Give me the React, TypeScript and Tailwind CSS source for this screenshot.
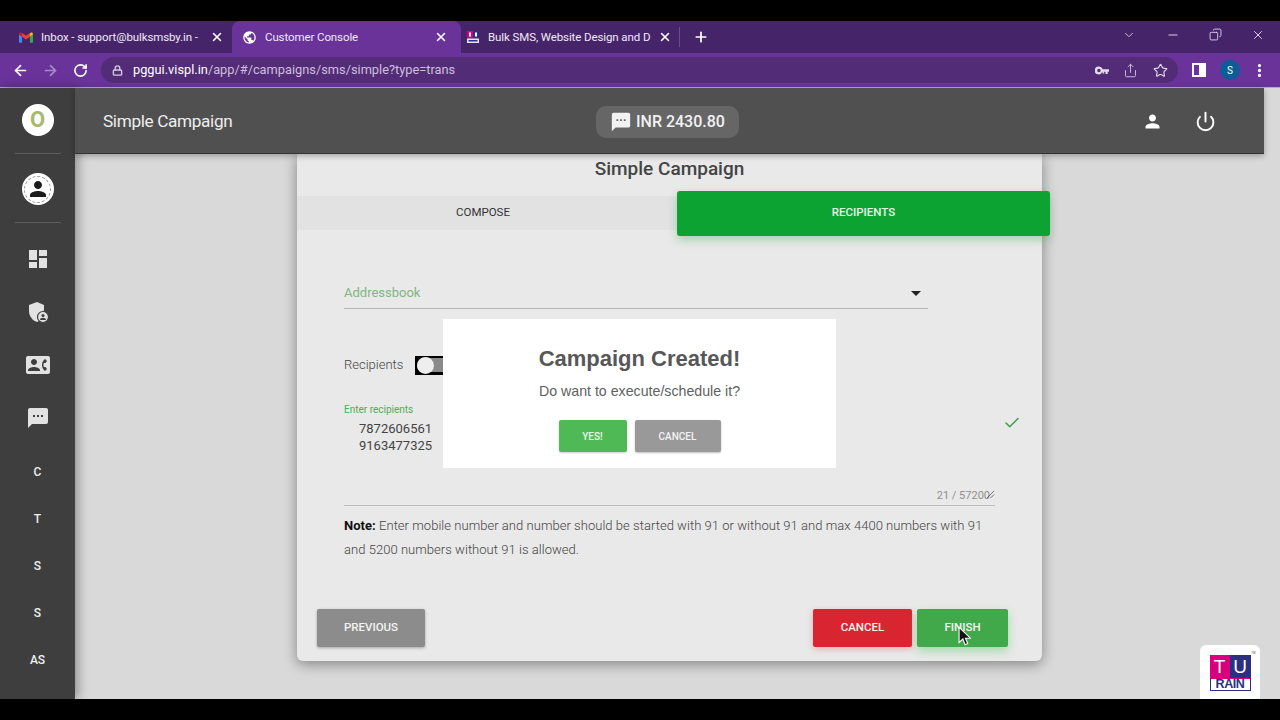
import { ArrowLeft, ArrowRight, ChevronDown, Copy, Lock, Minus, MoreVertical, Plus, Power, RotateCw, Share, Star, X, Check } from "lucide-react";

const SMS_PATH =
	"M20 2H4c-1.1 0-1.99.9-1.99 2L2 22l4-4h14c1.1 0 2-.9 2-2V4c0-1.1-.9-2-2-2zM9 11H7V9h2v2zm4 0h-2V9h2v2zm4 0h-2V9h2v2z";
const PERSON_PATH =
	"M12 12c2.21 0 4-1.79 4-4s-1.79-4-4-4-4 1.79-4 4 1.79 4 4 4zm0 2c-2.67 0-8 1.34-8 4v2h16v-2c0-2.66-5.33-4-8-4z";

function MaterialIcon({ d, className }: { d: string; className?: string }) {
	return (
		<svg viewBox="0 0 24 24" fill="currentColor" className={className} aria-hidden="true">
			<path d={d} />
		</svg>
	);
}

function GmailIcon() {
	return (
		<svg viewBox="0 0 16 12" className="h-[11px] w-[14px] shrink-0" aria-hidden="true">
			<path d="M0 2v9a1 1 0 0 0 1 1h2.5V5z" fill="#4285f4" />
			<path d="M16 2v9a1 1 0 0 1-1 1h-2.5V5z" fill="#34a853" />
			<path d="M3.5 5 8 8.4 12.5 5V1H12L8 4 4 1h-.5z" fill="#ea4335" />
			<path d="M0 2c0-1.6 2-2.5 3.5-1v4L0 2.4z" fill="#c5221f" />
			<path d="M16 2c0-1.6-2-2.5-3.5-1v4L16 2.4z" fill="#fbbc04" />
		</svg>
	);
}

function TuRainFavicon() {
	return (
		<svg viewBox="0 0 14 14" className="h-[14px] w-[14px] shrink-0" aria-hidden="true">
			<rect x="1" y="1" width="6" height="7" fill="#d6007f" />
			<rect x="7" y="1" width="6" height="7" fill="#2b3180" />
			<rect x="1" y="8.5" width="12" height="4.5" fill="#e8e4ee" />
			<rect x="3" y="2.5" width="2" height="4" fill="#fff" />
			<rect x="9" y="2.5" width="2" height="4" fill="#fff" />
			<rect x="2.5" y="10" width="9" height="1.5" fill="#2b3180" />
		</svg>
	);
}

function ChromeTab({
	icon,
	title,
	active,
	className,
}: {
	icon: React.ReactNode;
	title: string;
	active?: boolean;
	className?: string;
}) {
	return (
		<div className={`flex h-full items-center ${active ? "rounded-t-[8px] bg-[#693399]" : ""} ${className ?? ""}`}>
			{icon}
			<span className="ml-[8px] mt-[1px] min-w-0 flex-1 whitespace-nowrap text-[11.5px] tracking-[-0.1px] text-[#f0e8f6]">
				{title}
			</span>
			<X className="ml-[6px] size-[14px] shrink-0 text-white" strokeWidth={2.6} />
		</div>
	);
}

function BrowserChrome() {
	return (
		<>
			<div className="flex h-[32px] shrink-0 items-center bg-[#46246a]">
				<ChromeTab
					className="w-[232px] pl-[19px] pr-[8px]"
					icon={<GmailIcon />}
					title="Inbox - support@bulksmsby.in -"
				/>
				<ChromeTab
					active
					className="w-[229px] pl-[10px] pr-[13px]"
					icon={
						<MaterialIcon
							className="size-[15px] shrink-0 text-white"
							d="M12 2C6.48 2 2 6.48 2 12s4.48 10 10 10 10-4.48 10-10S17.52 2 12 2zm-1 17.93c-3.95-.49-7-3.85-7-7.93 0-.62.08-1.21.21-1.79L9 15v1c0 1.1.9 2 2 2v1.93zm6.9-2.54c-.26-.81-1-1.39-1.9-1.39h-1v-3c0-.55-.45-1-1-1H8v-2h2c.55 0 1-.45 1-1V7h2c1.1 0 2-.9 2-2v-.41c2.93 1.19 5 4.06 5 7.41 0 2.08-.8 3.97-2.1 5.39z"
						/>
					}
					title="Customer Console"
				/>
				<ChromeTab
					className="w-[218px] pl-[5px] pr-[7px]"
					icon={<TuRainFavicon />}
					title="Bulk SMS, Website Design and D"
				/>
				<div className="h-[20px] w-px bg-[#6d4c92]" />
				<Plus className="ml-[13px] size-[16px] text-white" strokeWidth={2.6} />
				<div className="ml-auto flex items-center pb-[5px] text-[#e6dcef]">
					<ChevronDown className="mr-[30px] size-[14px]" strokeWidth={1.4} />
					<Minus className="mr-[29px] size-[14px]" strokeWidth={1.6} />
					<Copy className="mr-[29px] size-[13px] -scale-x-100" strokeWidth={1.6} />
					<X className="mr-[15px] size-[14px]" strokeWidth={1.6} />
				</div>
			</div>
			<div className="flex h-[35px] shrink-0 items-center border-b border-[#b9a3d0] bg-[#693399] text-white">
				<ArrowLeft className="ml-[12px] size-[17px]" strokeWidth={2.4} />
				<ArrowRight className="ml-[13px] size-[17px] text-[#a88bc6]" strokeWidth={2.4} />
				<RotateCw className="ml-[14px] size-[15px]" strokeWidth={2.6} />
				<div className="ml-[13px] flex h-[26px] w-[1077px] items-center rounded-full bg-[#532c78] pl-[11px] pr-[10px]">
					<Lock className="size-[11px] text-[#d5c8e2]" strokeWidth={3} />
					<span className="ml-[10px] text-[12.8px] text-white">
						pggui.vispl.in<span className="text-[#cdbedd]">/app/#/campaigns/sms/simple?type=trans</span>
					</span>
					<svg viewBox="0 0 16 10" className="ml-auto mr-[-2px] h-[9px] w-[14px] text-[#e4dbed]" aria-hidden="true">
						<path
							fill="currentColor"
							fillRule="evenodd"
							d="M4.500 0.500a4.500 4.500 0 0 1 4.300 3H16v3h-1.500v2.500h-2.500V6.500h-1.500v2h-2V6.500h-.2a4.500 4.500 0 1 1-4.300-6zm0 2.500a2 2 0 1 0 0 4 2 2 0 0 0 0-4z"
						/>
					</svg>
					<Share className="ml-[16px] size-[15px] text-[#cdbedd]" strokeWidth={1.5} />
					<Star className="ml-[15px] size-[15px] text-[#e4dbed]" strokeWidth={1.8} />
				</div>
				<div className="ml-[14px] flex h-[14px] w-[14px] justify-end border-[2px] border-white bg-[#693399]">
					<div className="h-full w-[5px] bg-white" />
				</div>
				<div className="ml-[14px] flex size-[20px] items-center justify-center rounded-full bg-[#0a5d96] text-[10px] text-white">
					S
				</div>
				<MoreVertical className="ml-[11px] size-[17px]" strokeWidth={2.6} />
			</div>
		</>
	);
}

function SidebarLetter({ label, className }: { label: string; className?: string }) {
	return (
		<div className={`text-center text-[12px] font-medium leading-[14px] text-[#eeeeee] ${className ?? ""}`}>
			{label}
		</div>
	);
}

function Sidebar() {
	return (
		<aside className="z-10 flex w-[75px] shrink-0 flex-col items-center bg-[#3e3e3e] shadow-[3px_0_10px_rgba(0,0,0,0.35)]">
			<div className="mt-[16px] flex size-[32px] items-center justify-center rounded-full bg-white text-[22px] font-bold leading-none text-[#a8b86e]">
				O
			</div>
			<div className="mt-[17px] h-px w-[46px] bg-[#5c5c5c]" />
			<div className="mt-[19px] flex size-[32px] items-center justify-center rounded-full bg-white">
				<div className="flex size-[27px] items-center justify-center rounded-full border border-dashed border-[#999] text-[#1c1c1c]">
					<MaterialIcon d={PERSON_PATH} className="size-[24px]" />
				</div>
			</div>
			<div className="mt-[17px] h-px w-[46px] bg-[#5c5c5c]" />
			<MaterialIcon
				className="mt-[24px] size-[24px] text-[#e2e2e2]"
				d="M3 13h8V3H3v10zm0 8h8v-6H3v6zm10 0h8V11h-8v10zm0-18v6h8V3h-8z"
			/>
			<svg viewBox="0 0 24 24" className="mt-[29px] size-[24px] text-[#e2e2e2]" aria-hidden="true">
				<path fill="currentColor" d="M11 2 3 5v6c0 5 3.4 9.6 8 11 1-.3 1.900-.8 2.700-1.400L18 10V5z" />
				<circle cx="17" cy="17" r="5.500" fill="#e2e2e2" stroke="#3e3e3e" strokeWidth="1.200" />
				<circle cx="17" cy="15.500" r="1.500" fill="#3e3e3e" />
				<path d="M14 20c0-1.500 1.500-2.300 3-2.300s3 .8 3 2.300z" fill="#3e3e3e" />
			</svg>
			<MaterialIcon
				className="mt-[29px] size-[24px] text-[#e2e2e2]"
				d="M22 3H2C.9 3 0 3.900 0 5v14c0 1.100.9 2 2 2h20c1.100 0 1.990-.9 1.990-2L24 5c0-1.100-.9-2-2-2zM8 6c1.660 0 3 1.340 3 3s-1.340 3-3 3-3-1.340-3-3 1.340-3 3-3zm6 12H2v-1c0-2 4-3.100 6-3.100s6 1.100 6 3.100v1zm3.850-4h1.640L21 16l-1.990 1.990c-1.310-.98-2.280-2.380-2.730-3.990-.18-.64-.28-1.310-.28-2s.1-1.360.28-2c.45-1.620 1.420-3.010 2.730-3.990L21 8l-1.510 2h-1.640c-.22.63-.35 1.300-.35 2s.13 1.370.35 2z"
			/>
			<MaterialIcon d={SMS_PATH} className="mt-[29px] size-[24px] text-[#e2e2e2]" />
			<SidebarLetter label="C" className="mt-[35px]" />
			<SidebarLetter label="T" className="mt-[33px]" />
			<SidebarLetter label="S" className="mt-[33px]" />
			<SidebarLetter label="S" className="mt-[33px]" />
			<SidebarLetter label="AS" className="mt-[33px]" />
		</aside>
	);
}

function TopBar() {
	return (
		<header className="z-10 flex h-[66px] w-[1189px] shrink-0 items-center border-b border-[#333] bg-[#505050] pl-[28px] shadow-[0_2px_6px_rgba(0,0,0,0.3)]">
			<h1 className="mt-[2px] w-[130px] whitespace-nowrap text-[17.2px] font-normal tracking-[-0.35px] text-[#eeeeee]">
				Simple Campaign
			</h1>
			<div className="ml-[363px] mt-[2px] flex h-[32px] w-[143px] items-center rounded-[10px] bg-[#666666] pl-[14px]">
				<MaterialIcon d={SMS_PATH} className="size-[22px] text-[#f2f2f2]" />
				<span className="ml-[4px] text-[16px] font-medium text-[#f2f2f2]">INR 2430.80</span>
			</div>
			<MaterialIcon d={PERSON_PATH} className="ml-[403px] mt-[2px] size-[21px] text-white" />
			<Power className="ml-[32px] mt-[2px] size-[21px] text-white" strokeWidth={2.2} />
		</header>
	);
}

function FooterButton({ label, className }: { label: string; className: string }) {
	return (
		<button
			type="button"
			className={`flex h-[38px] items-center justify-center rounded-[2px] pb-[1px] text-[11.5px] font-medium text-[#f3f3f3] ${className}`}
		>
			{label}
		</button>
	);
}

function CampaignCard() {
	return (
		<section className="ml-[222px] flex h-[507px] w-[745px] flex-col rounded-b-[6px] bg-[#e9e9e9] shadow-[0_3px_14px_rgba(0,0,0,0.4)]">
			<h2 className="h-[30px] text-center text-[19px] font-medium leading-[30px] text-[#444]">
				Simple Campaign
			</h2>

			<div className="mt-[12px] flex h-[34px] items-center bg-[#e2e2e2]">
				<div className="w-[372px] shrink-0 text-center text-[11.5px] text-[#333]">COMPOSE</div>
				<div className="z-[1] ml-[8px] flex h-[45px] w-[373px] shrink-0 items-center justify-center rounded-[3px] bg-[#0ca332] text-[11.5px] font-medium text-[#e6f7e6] shadow-[0_4px_10px_rgba(40,170,70,0.35)]">
					RECIPIENTS
				</div>
			</div>

			<div className="px-[47px]">
				<div className="mt-[50px] flex h-[29px] w-[584px] items-center justify-between border-b border-[#b5b5b5] pb-[4px]">
					<span className="mt-[2px] text-[13px] text-[#7fb681]">Addressbook</span>
					<div className="mr-[7px] mt-[2px] h-0 w-0 border-x-[5px] border-t-[5px] border-x-transparent border-t-[#222]" />
				</div>

				<div className="mt-[46px] flex h-[20px] items-center">
					<span className="text-[13px] font-light text-[#444]">Recipients</span>
					<div className="ml-[12px] flex h-[19px] w-[36px] shrink-0 items-center bg-black pl-[2px]">
						<div className="flex h-[14px] w-[34px] items-center rounded-l-full bg-[#8a8a8a]">
							<div className="size-[17px] rounded-full bg-[#eeeeee]" />
						</div>
					</div>
				</div>

				<div className="mt-[29px] flex h-[102px] flex-col border-b border-[#bdbdbd]">
					<label className="h-[12px] text-[10px] leading-[12px] text-[#4caf50]">Enter recipients</label>
					<div className="mt-[4px] flex items-start justify-between pl-[15px] text-[13px] leading-[17px] text-[#444]">
						<div>
							<div>7872606561</div>
							<div>9163477325</div>
						</div>
						<Check className="-mr-[26px] -mt-[6px] size-[18px] text-[#3f9a4d]" strokeWidth={2} />
					</div>
					<div className="mt-auto flex items-end justify-end pb-[3px] text-[11px] leading-[12px] text-[#8f8f8f]">
						<span>21 / 57200</span>
						<svg viewBox="0 0 10 10" className="-ml-[4px] mb-[3px] size-[9px] text-[#444]" aria-hidden="true">
							<path d="M1 9 9 1M5 9l4-4" stroke="currentColor" strokeWidth="0.8" fill="none" />
						</svg>
					</div>
				</div>

				<p className="mt-[8px] text-[13px] font-light leading-[24px] tracking-[0.04px] text-[#444]">
					<strong className="font-bold text-[#111]">Note:</strong> Enter mobile number and number should be
					started with 91 or without 91 and max 4400 numbers with 91 and 5200 numbers without 91 is allowed.
				</p>
			</div>

			<div className="mt-auto mb-[14px] flex items-center pl-[20px] pr-[34px]">
				<FooterButton label="PREVIOUS" className="w-[108px] bg-[#8c8c8c] shadow-[0_1px_3px_rgba(0,0,0,0.3)]" />
				<FooterButton
					label="CANCEL"
					className="ml-auto w-[99px] bg-[#d9252f] shadow-[0_2px_6px_rgba(223,38,48,0.3)]"
				/>
				<FooterButton
					label="FINISH"
					className="ml-[5px] w-[91px] bg-[#41a94a] shadow-[0_4px_10px_rgba(70,200,90,0.45)]"
				/>
			</div>
		</section>
	);
}

function ConfirmDialog() {
	return (
		<div className="absolute left-[443px] top-[319px] z-20 flex h-[149px] w-[393px] flex-col items-center bg-white">
			<h3 className="mt-[25px] font-['Liberation_Sans',sans-serif] text-[22px] font-bold leading-[30px] text-[#575757]">
				Campaign Created!
			</h3>
			<p className="mt-[7px] font-['Liberation_Sans',sans-serif] text-[14.2px] leading-[20px] text-[#5f5f5f]">
				Do want to execute/schedule it?
			</p>
			<div className="mt-[19px] flex gap-[8px]">
				<button
					type="button"
					className="h-[32px] w-[68px] rounded-[2px] bg-[#4fba55] text-[10px] font-medium text-[#eafbea] shadow-[0_1px_2px_rgba(0,0,0,0.2)]"
				>
					YES!
				</button>
				<button
					type="button"
					className="h-[32px] w-[86px] rounded-[2px] bg-[#999999] text-[10px] font-medium text-[#f3f3f3] shadow-[0_1px_2px_rgba(0,0,0,0.25)]"
				>
					CANCEL
				</button>
			</div>
		</div>
	);
}

function Watermark() {
	return (
		<div className="absolute left-[1200px] top-[645px] z-20 flex h-[54px] w-[60px] justify-center rounded-t-[6px] bg-white pt-[10px] font-['Liberation_Sans',sans-serif]">
			<div className="relative w-[41px]">
				<div className="flex h-[23px]">
					<div className="flex w-[20px] items-center justify-center bg-[#d6007f] text-[19px] leading-none text-white">T</div>
					<div className="flex w-[21px] items-center justify-center bg-[#2b3180] text-[19px] leading-none text-white">U</div>
				</div>
				<div className="flex h-[13px] items-center justify-center border border-[#2b3180] border-t-[#d6007f] text-[12.5px] font-bold leading-none tracking-[-0.4px] text-[#2b3180]">
					RAIN
				</div>
				<span className="absolute -right-[5px] -top-[4px] text-[3px] text-[#555]">TM</span>
			</div>
		</div>
	);
}

export default function App() {
	return (
		<div className="relative flex h-[720px] w-[1280px] flex-col overflow-hidden bg-black font-['Roboto',sans-serif]">
			<div className="h-[21px] shrink-0" />
			<BrowserChrome />
			<main className="flex h-[611px] shrink-0 bg-[#d9d9d9]">
				<Sidebar />
				<div className="flex min-w-0 flex-1 flex-col">
					<TopBar />
					<CampaignCard />
				</div>
			</main>
			<ConfirmDialog />
			<Watermark />
			<svg viewBox="0 0 12 18" className="absolute left-[958px] top-[626px] z-30 h-[20px] w-[13px]" aria-hidden="true">
				<path d="M1 1v14l3.500-3.200L6.600 17l2.400-1-2.100-5H11.500z" fill="#111" stroke="#fff" strokeWidth="1" />
			</svg>
		</div>
	);
}
